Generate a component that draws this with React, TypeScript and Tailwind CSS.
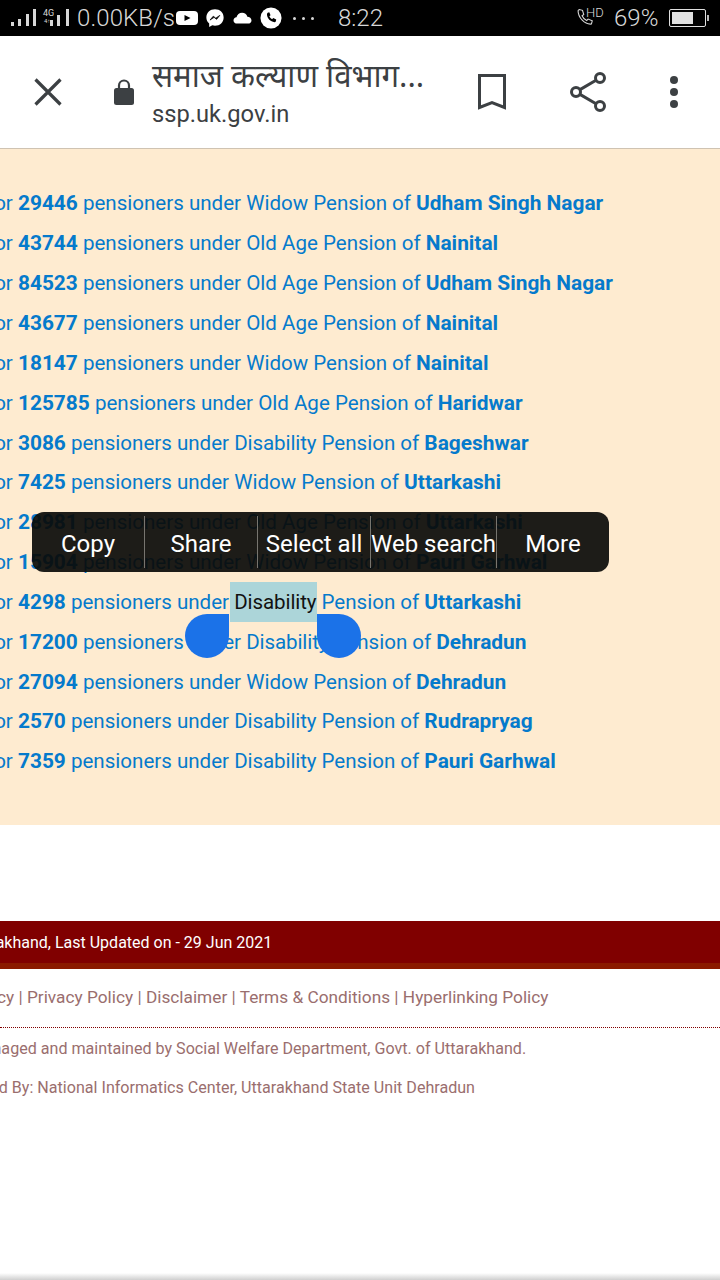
const rows = [
  ["29446", "Widow", "Udham Singh Nagar"],
  ["43744", "Old Age", "Nainital"],
  ["84523", "Old Age", "Udham Singh Nagar"],
  ["43677", "Old Age", "Nainital"],
  ["18147", "Widow", "Nainital"],
  ["125785", "Old Age", "Haridwar"],
  ["3086", "Disability", "Bageshwar"],
  ["7425", "Widow", "Uttarkashi"],
  ["28981", "Old Age", "Uttarkashi"],
  ["15904", "Widow", "Pauri Garhwal"],
  ["4298", "Disability", "Uttarkashi"],
  ["17200", "Disability", "Dehradun"],
  ["27094", "Widow", "Dehradun"],
  ["2570", "Disability", "Rudrapryag"],
  ["7359", "Disability", "Pauri Garhwal"],
];

const menuItems = [
  { label: "Copy", width: "w-[113px]" },
  { label: "Share", width: "w-[113px]" },
  { label: "Select all", width: "w-[113px]" },
  { label: "Web search", width: "w-[126px]" },
  { label: "More", width: "w-[112px]" },
];

function StatusBar() {
  return (
    <div className="h-9 bg-black flex items-center text-[#d8d8d8] font-['Roboto',sans-serif] font-light text-[24px] leading-[28px] shrink-0">
      <div className="relative ml-[10px] w-[67px] h-[24px] shrink-0">
        <svg width="67" height="24" viewBox="0 0 67 24" fill="#d8d8d8">
          <rect x="1" y="16" width="3" height="4" />
          <rect x="8" y="13" width="3" height="7" />
          <rect x="16" y="8" width="3" height="12" />
          <rect x="23" y="3" width="3" height="17" />
          <rect x="40" y="14" width="3" height="6" />
          <rect x="47" y="9" width="3" height="11" />
          <rect x="56" y="3" width="3" height="17" />
        </svg>
        <span className="absolute left-[33px] top-[2px] text-[9px] leading-[10px] font-normal">4G</span>
        <span className="absolute left-[34px] top-[12px] text-[6px] leading-[6px] font-normal">4↑</span>
      </div>
      <span className="w-[99px] shrink-0 tracking-[0.1px]">0.00KB/s</span>
      <svg width="22" height="14" viewBox="0 0 22 14" className="shrink-0">
        <rect width="22" height="14" rx="4" fill="#fff" />
        <path d="M8.500 4 L14.500 7 L8.500 10 Z" fill="#000" />
      </svg>
      <svg width="20" height="20" viewBox="0 0 22 22" className="ml-[7px] shrink-0">
        <path d="M11 1.500C5.500 1.500 1.500 5.400 1.500 10.400c0 2.700 1.200 5 3.100 6.600V21l3.400-1.900c1 .3 2 .4 3 .4 5.500 0 9.500-4 9.500-9.100S16.500 1.500 11 1.500z" fill="#fff" />
        <path d="M5.500 13.300l3.600-4.300 2.800 2.200 4.400-3.100-3.500 4.400-2.800-2.200z" fill="#000" stroke="#000" strokeWidth="0.800" />
      </svg>
      <svg width="21" height="12" viewBox="0 0 22 14" className="ml-[7px] shrink-0">
        <path d="M5 13.500C2.300 13.500.5 11.800.5 9.800c0-2 1.500-3.400 3.500-3.600C4.700 3.200 7.300 1 10.500 1c3 0 5.400 1.800 6.200 4.500 2.500.1 4.800 1.800 4.800 4.300 0 2.200-1.800 3.700-4 3.700z" fill="#fff" />
      </svg>
      <svg width="22" height="22" viewBox="0 0 24 24" className="ml-[7px] shrink-0">
        <circle cx="12" cy="12" r="11.500" fill="#fff" />
        <path d="M8.300 6.200l1.800-.4 1.400 3.200-1.300 1.200c.6 1.400 1.600 2.500 3 3.200l1.300-1.300 3.200 1.400-.4 2c-.2.700-.8 1.100-1.500 1.100-4.300-.3-8-4-8.200-8.300 0-.8.200-1.500.7-1.700z" fill="#000" />
      </svg>
      <div className="ml-[11px] flex gap-[6px] shrink-0">
        <span className="w-[3px] h-[3px] rounded-full bg-[#d8d8d8]"></span>
        <span className="w-[3px] h-[3px] rounded-full bg-[#d8d8d8]"></span>
        <span className="w-[3px] h-[3px] rounded-full bg-[#d8d8d8]"></span>
      </div>
      <span className="ml-[24px] w-[237px] shrink-0">8:22</span>
      <div className="relative w-[39px] h-[24px] shrink-0">
        <svg width="20" height="20" viewBox="0 0 24 24" className="mt-[1px]" fill="none" stroke="#d8d8d8" strokeWidth="1.300">
          <path d="M5 3l4 1 1.500 5-2 1.500c1 2.500 3 4.500 5.500 5.800l1.700-1.800 5 2-1 4c-8 1-16-8-16-16z" />
        </svg>
        <span className="absolute left-[11px] top-0 text-[13px] leading-[14px]">HD</span>
      </div>
      <span className="w-[55px] shrink-0">69%</span>
      <div className="w-[37px] h-[18px] border border-[#e0e0e0] rounded-[2px] p-[2px] shrink-0">
        <div className="h-full w-[21px] bg-[#e0e0e0]"></div>
      </div>
      <div className="ml-[1px] w-[2px] h-[6px] bg-[#bbb] shrink-0"></div>
    </div>
  );
}

function Toolbar() {
  return (
    <div className="h-[113px] bg-white border-b border-[#cfc3b2] flex items-center shrink-0">
      <svg width="28" height="28" viewBox="0 0 28 28" className="ml-[34px] shrink-0" stroke="#3c4043" strokeWidth="3.200" fill="none">
        <path d="M1.500 1.500 L26.500 26.500 M26.500 1.500 L1.500 26.500" />
      </svg>
      <svg width="20" height="26" viewBox="0 0 20 26" className="ml-[52px] shrink-0">
        <path d="M5 10V6.500a5 5 0 0 1 10 0V10" stroke="#3c4043" strokeWidth="2.200" fill="none" />
        <rect y="9" width="20" height="17" rx="2.500" fill="#3c4043" />
      </svg>
      <div className="ml-[18px] w-[326px] shrink-0 font-['Roboto',sans-serif] text-[#3c4043]">
        <div className="text-[31.200px] leading-[40px] whitespace-nowrap font-['Noto_Sans','Roboto',sans-serif]">समाज कल्याण विभाग...</div>
        <div className="text-[23.700px] leading-[32px] mt-[3px]">ssp.uk.gov.in</div>
      </div>
      <svg width="28" height="36" viewBox="0 0 28 36" className="shrink-0" stroke="#3c4043" strokeWidth="3" fill="none">
        <path d="M1.500 1.500h25v32L14 28.500 1.500 33.500z" />
      </svg>
      <svg width="36" height="40" viewBox="0 0 36 40" className="ml-[64px] shrink-0" stroke="#3c4043" strokeWidth="3" fill="none">
        <circle cx="6" cy="20" r="4.500" />
        <circle cx="30" cy="6" r="4.500" />
        <circle cx="30" cy="34" r="4.500" />
        <path d="M10 17.600L26 8.300M10 22.400L26 31.700" />
      </svg>
      <svg width="8" height="32" viewBox="0 0 8 32" className="ml-[64px] shrink-0" fill="#3c4043">
        <circle cx="4" cy="4" r="4" />
        <circle cx="4" cy="16" r="4" />
        <circle cx="4" cy="28" r="4" />
      </svg>
    </div>
  );
}

function PensionList() {
  return (
    <div className="bg-[#feebd0] h-[676px] pt-[35.470px] relative shrink-0 overflow-hidden font-['Roboto',sans-serif] text-[#057acc] text-[20.550px] leading-[39.850px]">
      {rows.map(([count, scheme, district], i) => (
        <div key={count} className="whitespace-nowrap -ml-[13px]">
          for <b className="font-bold text-[20.880px]">{count}</b> pensioners under{" "}
          {i === 10 ? (
            <span className="bg-[#acd5d9] text-[#111] tracking-[-0.1px] -ml-[4px] pl-[4px] pr-[1px] -mr-[1px] py-[8px]">{scheme}</span>
          ) : (
            <span className={scheme === "Disability" ? "tracking-[-0.1px]" : ""}>{scheme}</span>
          )}{" "}
          Pension of <b className="font-bold text-[20.880px]">{district}</b>
        </div>
      ))}
      {/* selection handles */}
      <div className="absolute left-[185px] top-[465px] w-[44px] h-[44px] bg-[#1b72e8] rounded-full rounded-tr-none"></div>
      <div className="absolute left-[317px] top-[465px] w-[44px] h-[44px] bg-[#1b72e8] rounded-full rounded-tl-none"></div>
      {/* text selection menu */}
      <div className="absolute left-[32px] top-[363px] w-[577px] h-[60px] bg-[#0a0a08]/[0.92] rounded-[12px] flex items-center text-white text-[24px] leading-[30px]">
        {menuItems.map((item, i) => (
          <div
            key={item.label}
            className={`${item.width} h-[52px] pt-[4px] flex items-center justify-center whitespace-nowrap ${i < 4 ? "border-r border-[#77756f]" : ""}`}
          >
            {item.label}
          </div>
        ))}
      </div>
    </div>
  );
}

function Footer() {
  return (
    <div className="font-['Roboto',sans-serif] flex-1 bg-white relative overflow-hidden">
      <div className="h-[96px]"></div>
      <div className="h-[48px] bg-[#800000] border-b-[6px] border-[#8b1a00] text-white text-[16px] leading-[43px] whitespace-nowrap -ml-[39px]">
        Uttarakhand, Last Updated on - 29 Jun 2021
      </div>
      <div className="h-[59px] border-b border-dotted border-[#800000] text-[#9a6e6e] text-[17.250px] leading-[56px] whitespace-nowrap">
        <span className="-ml-[110px] inline-block">Copyright Policy | Privacy Policy | Disclaimer | Terms &amp; Conditions | Hyperlinking Policy</span>
      </div>
      <div className="text-[#9a6e6e] text-[16.100px] whitespace-nowrap leading-[39px] pt-[1px]">
        <div className="-ml-[92px]">Website managed and maintained by Social Welfare Department, Govt. of Uttarakhand.</div>
        <div className="-ml-[59px]">Designed By: National Informatics Center, Uttarakhand State Unit Dehradun</div>
      </div>
      <div className="absolute bottom-0 left-0 right-0 h-[7px] bg-gradient-to-b from-white to-[#cfcfcf]"></div>
    </div>
  );
}

export default function App() {
  return (
    <div className="w-[720px] h-[1280px] flex flex-col overflow-hidden bg-white">
      <StatusBar />
      <Toolbar />
      <PensionList />
      <Footer />
    </div>
  );
}
